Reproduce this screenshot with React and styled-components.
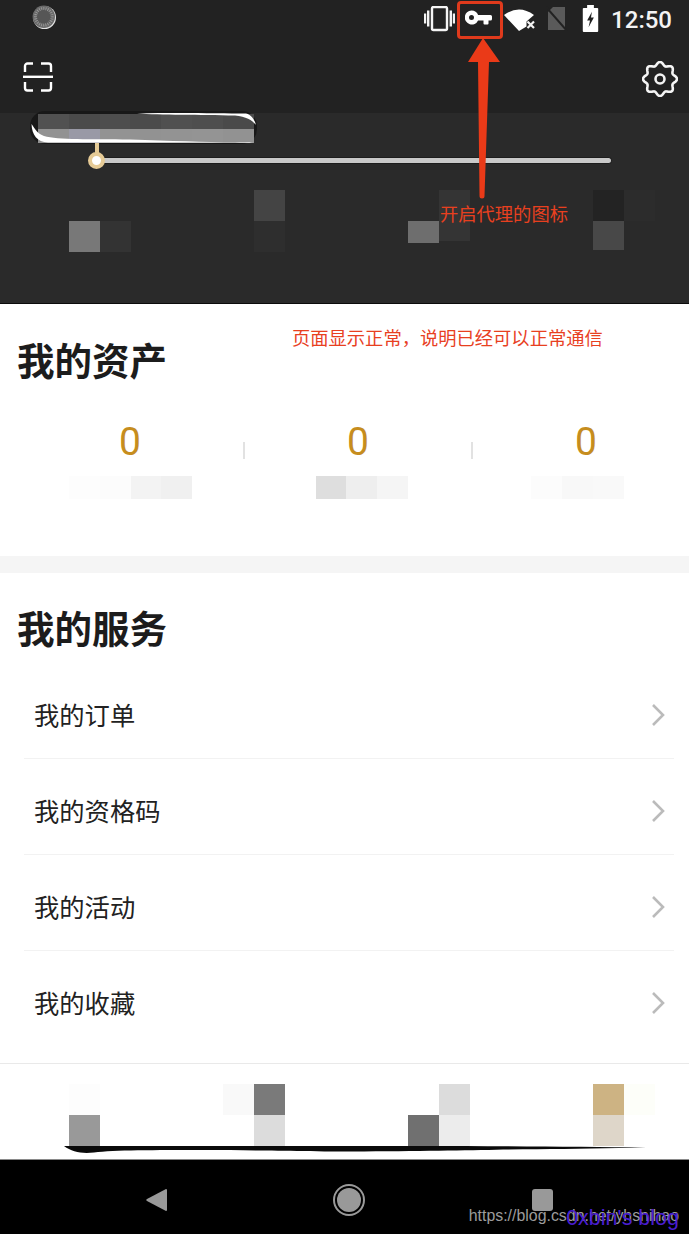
import React from "react";
import styled, { createGlobalStyle } from "styled-components";

const Global = createGlobalStyle`
  html, body { margin: 0; padding: 0; background: #fff; }
  * { box-sizing: border-box; }
  body { font-family: "Noto Sans CJK SC", "Noto Sans", sans-serif; }
`;

const Page = styled.div`
  position: relative;
  width: 689px;
  height: 1234px;
  overflow: hidden;
  display: flex;
  flex-direction: column;
  background: #fff;
`;

const Header = styled.header`
  height: 304px;
  display: flex;
  flex-direction: column;
  background: #2a2a2a;
  border-bottom: 1px solid #0c0c0c;
`;
const TopArea = styled.div`
  height: 113px;
  background: #222;
`;
const StatusBar = styled.div`
  height: 40px;
  display: flex;
  align-items: center;
  padding: 0 17px 0 32px;
`;
const Spinner = styled.svg`
  width: 25px;
  height: 25px;
  margin-top: -5px;
  margin-right: auto;
`;
const StatusIcon = styled.svg`
  margin-left: ${(p) => p.$ml}px;
  margin-top: ${(p) => p.$mt || 0}px;
  flex: none;
`;
const Clock = styled.span`
  margin-left: 12px;
  font: 500 24px/40px Roboto, sans-serif;
  color: #f4f4f4;
`;
const Toolbar = styled.div`
  height: 73px;
  display: flex;
  justify-content: space-between;
  padding: 21px 11px 0 22px;
`;
const LowerHeader = styled.div`
  flex: 1;
  display: flex;
  flex-direction: column;
`;
const Bubble = styled.div`
  position: relative;
  margin: -2px 0 0 30px;
  width: 227px;
  height: 33px;
  padding: 3px 3px 1px 8px;
  display: grid;
  grid-template-columns: repeat(7, 30.83px);
  grid-template-rows: 1fr 1fr;
  background: #181818;
  border-radius: 15px;
`;
const BubbleShine = styled.svg`
  position: absolute;
  inset: 0;
`;
const BubbleCell = styled.div`
  background: ${(p) => p.$c};
`;
const SliderRow = styled.div`
  margin-left: 88px;
  width: 524px;
  height: 24px;
  display: flex;
  align-items: center;
`;
const Knob = styled.div`
  position: relative;
  flex: none;
  width: 17px;
  height: 17px;
  margin-top: 8px;
  border-radius: 50%;
  background: #fff;
  border: 4px solid #e6cb96;
  &::before {
    content: "";
    position: absolute;
    left: 2.5px;
    top: -13px;
    width: 4px;
    height: 10px;
    background: #e6cb96;
  }
`;
const Track = styled.div`
  flex: 1;
  height: 7px;
  margin-top: 8px;
  margin-left: -1px;
  background: #c9c9c9;
  border: 1px solid #1d1d1d;
  border-left: 0;
  border-radius: 0 4px 4px 0;
`;
const Mosaic = styled.div`
  margin-left: 69px;
  margin-top: ${(p) => p.$top || 0}px;
  display: grid;
  grid-template-columns: repeat(20, 30.83px);
  grid-auto-rows: ${(p) => p.$row}px;
`;
const Cell = styled.div`
  grid-column: ${(p) => p.$col + 1};
  grid-row: ${(p) => p.$r};
  height: ${(p) => (p.$h ? `${p.$h}px` : "auto")};
  background: ${(p) => p.$c};
`;

const Section = styled.section`
  background: #fff;
`;
const AssetSection = styled(Section)`
  height: 252px;
  padding-top: 30px;
`;
const Title = styled.h2`
  margin: 0 0 0 17px;
  font-size: 37.500px;
  line-height: 50px;
  font-weight: 700;
  color: #1c1c1c;
`;
const Stats = styled.div`
  margin: 35px 0 0 16px;
  display: grid;
  grid-template-columns: repeat(3, 228px);
  height: 43px;
`;
const Stat = styled.div`
  position: relative;
  text-align: center;
  font: 400 39px/46px Roboto, sans-serif;
  color: #c68d1e;
  &:not(:last-child)::after {
    content: "";
    position: absolute;
    right: -1px;
    top: 23px;
    width: 2px;
    height: 17px;
    background: #e2e2e2;
  }
`;
const Band = styled.div`
  height: 17px;
  background: #f5f5f5;
`;
const ServiceSection = styled(Section)`
  height: 490px;
  padding-top: 29px;
`;
const List = styled.ul`
  list-style: none;
  margin: 11px 15px 0 24px;
  padding: 0;
`;
const Row = styled.li`
  height: 96px;
  padding: 7px 9px 0 10px;
  display: flex;
  align-items: center;
  justify-content: space-between;
  border-bottom: 1px solid ${(p) => (p.$last ? "transparent" : "#f2f2f2")};
  font-size: 25.300px;
  color: #222;
`;
const Chevron = styled.svg`
  width: 14px;
  height: 22px;
  margin-top: 2px;
  fill: none;
  stroke: #bbb;
  stroke-width: 2.600;
`;
const TabBar = styled.div`
  position: relative;
  height: 96px;
  padding-top: 20px;
  background: #fff;
  border-top: 1px solid #e9e9e9;
`;
const Scribble = styled.svg`
  position: absolute;
  left: 64px;
  top: 81px;
`;
const NavBar = styled.nav`
  position: relative;
  flex: 1;
  display: flex;
  align-items: center;
  background: #000;
  border-top: 1px solid #8a8a8a;
  padding: 0 136px 0 146px;
  justify-content: space-between;
`;
const NavBack = styled.svg`
  width: 21px;
  height: 24px;
  margin-top: 5px;
`;
const NavHome = styled.div`
  width: 32px;
  height: 32px;
  margin-top: 5px;
  margin-right: 1px;
  border-radius: 50%;
  border: 2px solid #999;
  padding: 2px;
  &::before {
    content: "";
    display: block;
    width: 100%;
    height: 100%;
    border-radius: 50%;
    background: #999;
  }
`;
const NavSquare = styled.div`
  width: 21px;
  height: 22px;
  margin-top: 5px;
  border-radius: 3px;
  background: #999;
`;
const Watermark = styled.span`
  position: absolute;
  right: 10px;
  top: 45px;
  font: 400 15.900px/22px "Liberation Sans", Arial, sans-serif;
  color: rgba(210, 210, 210, 0.75);
  white-space: nowrap;
`;
const BlogMark = styled.span`
  position: absolute;
  right: 10px;
  top: 46px;
  font: 400 21.500px/24px "Liberation Sans", Arial, sans-serif;
  color: #4a1ed0;
  white-space: nowrap;
`;

const Annotation = styled.span`
  position: absolute;
  left: ${(p) => p.$x}px;
  top: ${(p) => p.$y}px;
  font-size: 18.300px;
  line-height: 24px;
  color: #e8401f;
  white-space: nowrap;
`;
const KeyHighlight = styled.div`
  position: absolute;
  left: 457px;
  top: 1px;
  width: 46px;
  height: 38px;
  border: 3px solid #df3a1c;
  border-radius: 4px;
`;
const ArrowMark = styled.svg`
  position: absolute;
  left: 460px;
  top: 36px;
  width: 48px;
  height: 166px;
`;

const gearPath = (() => {
  const pts = [];
  for (let i = 0; i < 180; i++) {
    const a = (i / 180) * Math.PI * 2;
    const r = 15.3 + 1.7 * Math.cos(a * 8);
    pts.push(`${(18 + r * Math.cos(a)).toFixed(2)} ${(18 + r * Math.sin(a)).toFixed(2)}`);
  }
  return `M${pts.join("L")}Z`;
})();

const spinnerTicks = Array.from({ length: 24 }, (_, i) => i * 15);

const stats = [0, 1, 2];
const headerCells = [
  [0, 2, "#787878"], [1, 2, "#333"], [6, 1, "#444"], [6, 2, "#2e2e2e"],
  [11, 2, "#6e6e6e", 22], [12, 1, "#343434"], [12, 2, "#343434", 20], [17, 1, "#232323"], [17, 2, "#484848", 29], [18, 1, "#2c2c2c"],
];
const labelCells = [
  [0, 1, "#fdfdfd"], [1, 1, "#fcfcfc"], [2, 1, "#f3f3f3"], [3, 1, "#f0f0f0"],
  [8, 1, "#dedede"], [9, 1, "#eee"], [10, 1, "#f5f5f5"],
  [15, 1, "#fcfcfc"], [16, 1, "#f8f8f8"], [17, 1, "#f9f9f9"],
];
const tabCells = [
  [0, 1, "#fdfdfd"], [0, 2, "#999"], [5, 1, "#f9f9f9"], [6, 1, "#7a7a7a"], [6, 2, "#dcdcdc"],
  [11, 2, "#707070"], [12, 1, "#dcdcdc"], [12, 2, "#ececec"], [17, 1, "#cdb383"], [17, 2, "#ded6c9"], [18, 1, "#fdfef9"],
];
const bubbleColors = ["#515151", "#4b4b4b", "#4e4e4e", "#4b4b4b", "#505050", "#4e4e4e", "#4a4a4a",
  "#929292", "#9999a6", "#939393", "#929292", "#939393", "#949494", "#929292"];
const services = ["我的订单", "我的资格码", "我的活动", "我的收藏"];

const cells = (list) =>
  list.map(([col, r, c, h]) => <Cell key={`${col}-${r}`} $col={col} $r={r} $c={c} $h={h} />);

export default function App() {
  return (
    <Page>
      <Global />
      <Header>
        <TopArea>
          <StatusBar>
            <Spinner viewBox="0 0 25 25">
              <circle cx="12.5" cy="12.5" r="11.5" fill="#e2e2e2" />
              <circle cx="11.8" cy="11.8" r="11.2" fill="#6a6a6a" />
              <circle cx="11.8" cy="11.8" r="8" fill="#565656" />
              {spinnerTicks.map((a) => (
                <rect key={a} x="11.4" y="2" width="0.9" height="3" fill="#9a9a9a" transform={`rotate(${a} 11.8 11.8)`} />
              ))}
            </Spinner>
            <StatusIcon $ml={0} $mt={-2} width="31" height="26" viewBox="0 0 31 26">
              <rect x="8" y="1" width="15" height="23" rx="1.5" fill="none" stroke="#f4f4f4" strokeWidth="2.400" />
              <path d="M4.200 4.500v16M1 7.500v10M26.800 4.500v16M30 7.500v10" stroke="#f4f4f4" strokeWidth="2.400" fill="none" />
            </StatusIcon>
            <StatusIcon $ml={10} $mt={-4} width="28" height="18" viewBox="0 0 28 18">
              <path fillRule="evenodd" fill="#fff" d="M6.500 1.500a7 7 0 0 1 6.600 4.500H25.500a1.500 1.500 0 0 1 1.500 1.500V10a1.500 1.500 0 0 1-1.500 1.500H23.500v3a1 1 0 0 1-1 1H19.500a1 1 0 0 1-1-1v-3H13.100A7 7 0 1 1 6.500 1.500zM6.500 6a2.500 2.500 0 1 0 0 5a2.500 2.500 0 0 0 0-5z" />
            </StatusIcon>
            <StatusIcon $ml={11} $mt={-1} width="31" height="26" viewBox="0 0 31 26">
              <path fill="#fff" d="M0 8Q15 -3 30 8L22.500 14.500V19.500L15 24Z" />
              <path d="M23.500 14.500l6.500 6.500M30 14.500l-6.500 6.500" stroke="#f4f4f4" strokeWidth="2.200" fill="none" />
            </StatusIcon>
            <StatusIcon $ml={11} $mt={-4} width="22" height="26" viewBox="0 0 22 26">
              <path fill="#5a5a5a" d="M7 2h12v23H2V7z" />
              <path d="M0 2l21 24" stroke="#222" strokeWidth="2" />
            </StatusIcon>
            <StatusIcon $ml={14} $mt={-3} width="17" height="27" viewBox="0 0 17 28">
              <path fill="#fff" d="M5 0h7v3h3.500a1 1 0 0 1 1 1v23a1 1 0 0 1-1 1H1.500a1 1 0 0 1-1-1V4a1 1 0 0 1 1-1H5z" />
              <path fill="#222" d="M10 7L5 16h3l-1.500 7L12 13H9z" />
            </StatusIcon>
            <Clock>12:50</Clock>
          </StatusBar>
          <Toolbar>
            <svg width="32" height="32" viewBox="0 0 32 32" fill="none" stroke="#fff" strokeWidth="2.400">
              <path d="M3 11V5a2.500 2.500 0 0 1 2.500-2.500H11M19 2.500h7.500A2.500 2.500 0 0 1 29 5v6M3 21v6a2.500 2.500 0 0 0 2.500 2.500H11M19 29.500h7.500A2.500 2.500 0 0 0 29 27v-6" />
              <path d="M1 15.800h30" />
            </svg>
            <svg width="36" height="36" viewBox="0 0 36 36" fill="none" stroke="#f4f4f4" strokeWidth="2.600">
              <path d={gearPath} strokeLinejoin="round" />
              <circle cx="18" cy="18" r="4.500" />
            </svg>
          </Toolbar>
        </TopArea>
        <LowerHeader>
          <Bubble>
            {bubbleColors.map((c, i) => (
              <BubbleCell key={i} $c={c} />
            ))}
            <BubbleShine width="227" height="33" viewBox="0 0 227 33">
              <path fill="#fff" d="M1.500 13C2 24 7 31 18 31.500H205C213 32 219 32 224 31C190 32 150 30 100 28.500C60 28 28 29 14 25C8 23 5 18 1.500 13Z" />
              <path fill="#fff" d="M107 2.500C150 1.500 190 2.500 216 2.500C221 3.500 225 9 226 14C222 9 216 5.500 205 4.500C170 4 130 4 107 2.500Z" />
            </BubbleShine>
          </Bubble>
          <SliderRow>
            <Knob />
            <Track />
          </SliderRow>
          <Mosaic $top={22} $row={31}>{cells(headerCells)}</Mosaic>
        </LowerHeader>
      </Header>

      <AssetSection>
        <Title>我的资产</Title>
        <Stats>
          {stats.map((i) => (
            <Stat key={i}>0</Stat>
          ))}
        </Stats>
        <Mosaic $top={14} $row={23}>{cells(labelCells)}</Mosaic>
      </AssetSection>
      <Band />
      <ServiceSection>
        <Title>我的服务</Title>
        <List>
          {services.map((s, i) => (
            <Row key={s} $last={i === services.length - 1}>
              {s}
              <Chevron viewBox="0 0 14 22">
                <path d="M2 1l10 10L2 21" />
              </Chevron>
            </Row>
          ))}
        </List>
      </ServiceSection>
      <TabBar>
        <Mosaic $row={31}>{cells(tabCells)}</Mosaic>
        <Scribble width="582" height="9" viewBox="0 0 582 9">
          <path fill="#0a0a0a" d="M0 1H140C210 1 290 1 360 1C430 1 520 2 582 2.500L500 4C450 4 400 6 300 6.500C230 6.500 190 5 140 5C90 5 50 5 30 7.500C18 9 8 7 0 1Z" />
        </Scribble>
      </TabBar>
      <NavBar>
        <NavBack viewBox="0 0 21 24">
          <path fill="#999" d="M20 1a1 1 0 0 1 1 1v20a1 1 0 0 1-1 1L1 13a1.200 1.200 0 0 1 0-2z" />
        </NavBack>
        <NavHome />
        <NavSquare />
        <Watermark>https://blog.csdn.net/yhsnihao</Watermark>
        <BlogMark>0xbin's blog</BlogMark>
      </NavBar>

      <KeyHighlight />
      <ArrowMark viewBox="0 0 48 166">
        <path fill="#ea3a18" d="M23 2L40 26H29L24.500 160a2.500 2.500 0 0 1-5 0L18 26H8Z" />
      </ArrowMark>
      <Annotation $x={440} $y={201}>开启代理的图标</Annotation>
      <Annotation $x={292} $y={325}>页面显示正常，说明已经可以正常通信</Annotation>
    </Page>
  );
}
